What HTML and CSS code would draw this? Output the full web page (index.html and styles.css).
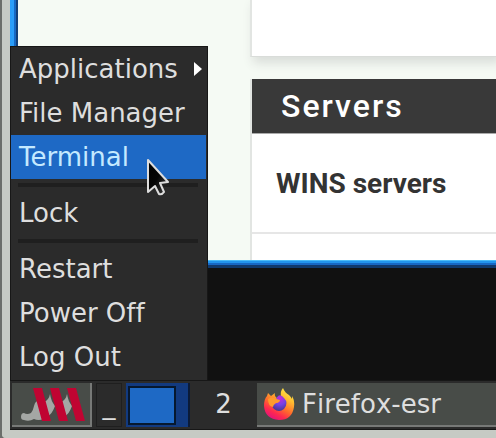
FILE: index.html
```
<!DOCTYPE html>
<html lang="en">
<head>
<meta charset="utf-8">
<title>Desktop</title>
<link rel="stylesheet" href="styles.css">
</head>
<body>
<div class="frame">
  <main class="desktop">
    <section class="window">
      <div class="card card-empty"></div>
      <div class="card card-servers">
        <h2 class="card-title">Servers</h2>
        <div class="card-row">WINS servers</div>
        <div class="card-rest"></div>
      </div>
    </section>
    <nav class="menu">
      <button class="item" type="button">Applications
        <svg class="arrow" viewBox="0 0 8 16" width="8" height="16"><path d="M0 1 L8 8 L0 15Z" fill="#fff"/></svg>
      </button>
      <button class="item" type="button">File Manager</button>
      <button class="item selected" type="button">Terminal</button>
      <hr class="separator">
      <button class="item" type="button">Lock</button>
      <hr class="separator">
      <button class="item" type="button">Restart</button>
      <button class="item" type="button">Power Off</button>
      <button class="item" type="button">Log Out</button>
      <svg class="pointer" viewBox="0 0 26 40" width="26" height="40">
        <defs><linearGradient id="ink" x1="0" y1="0" x2="1" y2="1"><stop offset="0" stop-color="#000"/><stop offset=".5" stop-color="#050505"/><stop offset="1" stop-color="#444"/></linearGradient></defs>
        <path d="M2 3 L2 35 L9 29 L13 37 Q16 38 18 35 L14 26 L22 25Z" fill="url(#ink)" stroke="#ddd" stroke-width="2" stroke-linejoin="round"/>
      </svg>
    </nav>
  </main>
  <footer class="taskbar">
    <button class="start" type="button" aria-label="Menu">
      <svg viewBox="0 0 66 36" width="66" height="36">
        <path d="M1 31 Q1 27 4 27 Q7 29 11 27 Q13 25 14 20 Q15 16 18 14 L24 33 Q18 35 14 33 Q9 36 4 34 Q1 34 1 31Z" fill="#a4a7a4"/>
        <path d="M30 8 Q31 15 35 20 Q32 28 28 30 L24 16 Q29 14 30 8Z M47 8 Q48 15 52 20 Q49 28 45 30 L41 16 Q46 14 47 8Z" fill="#a4a7a4"/>
        <path d="M13 2 H22 L31 35 H22Z M30 2 H39 L48 35 H39Z M47 2 H56 L65 35 H56Z" fill="#c00432"/>
      </svg>
    </button>
    <button class="minimize" type="button">_</button>
    <button class="pager" type="button" aria-label="Workspace"><span class="pager-window"></span></button>
    <span class="workspace">2</span>
    <button class="task" type="button">
      <svg viewBox="0 0 32 34" width="32" height="34">
        <defs>
          <linearGradient id="fire" x1=".85" y1="0" x2=".3" y2="1"><stop offset="0" stop-color="#fff44f"/><stop offset=".3" stop-color="#ffbd30"/><stop offset=".6" stop-color="#ff6a2c"/><stop offset=".8" stop-color="#ff294f"/><stop offset="1" stop-color="#e2127c"/></linearGradient>
          <radialGradient id="globe" cx=".55" cy=".2" r=".8"><stop offset="0" stop-color="#c42bd8"/><stop offset=".5" stop-color="#7542e5"/><stop offset="1" stop-color="#46378e"/></radialGradient>
        </defs>
        <path d="M20 1 Q22 6 26 8 Q28 10 29 12 L29 9 Q32 14 31 20 Q29 33 16 33 Q2 32 1 19 Q1 12 4 9 L5 6 L8 9 L12 6 Q11 9 14 11 Q16 10 18 10 Q17 4 20 1Z" fill="url(#fire)"/>
        <path d="M15 9 Q18 7 21 11 Q26 16 21 22 Q16 26 11 22 Q8 19 10 16 Q14 17 17 14 L13 12Z" fill="url(#globe)"/>
        <path d="M5 12 Q9 9 13 12 L17 13 Q16 16 13 16 Q10 18 10 20 Q5 19 5 12Z" fill="#ff9a2c"/>
      </svg>
      <span>Firefox-esr</span>
    </button>
  </footer>
</div>
</body>
</html>
```
FILE: styles.css
```
* { box-sizing: border-box; }
body {
  margin: 0;
  background: #6b6e6a;
  font-family: "DejaVu Sans", sans-serif;
  font-size: 26px;
}
button {
  margin: 0;
  padding: 0;
  border: 0;
  font: inherit;
  font-variant-ligatures: none;
  color: #dedede;
  background: none;
}
.frame {
  display: flex;
  flex-direction: column;
  height: 100vh;
  border: solid #c6cac4;
  border-width: 0 0 8px 8px;
  border-bottom-left-radius: 4px;
  margin-left: 2px;
}
.desktop {
  position: relative;
  flex: 1;
  display: flex;
  flex-direction: column;
  background: #111;
}
.window {
  height: 268px;
  display: flex;
  flex-direction: column;
  padding-left: 232px;
  background: #f5faf4;
  border-left: 8px solid;
  border-image: linear-gradient(to right, #2a9df8 0 4px, #1668c4 4px 6px, #123f78 6px 8px) 0 0 0 8;
  overflow: hidden;
}
.window::after {
  content: "";
  flex: none;
  height: 8px;
  margin-left: -240px;
  background: linear-gradient(#4bbcf8 0 1px, #2295ee 1px 3px, #1768c5 3px 5px, #10396c 5px 8px);
}
.card { border-left: 2px solid #e2e5e2; background: #fff; }
.card-empty {
  height: 57px;
  border-bottom: 1px solid #d9dcd9;
  box-shadow: 4px 5px 10px 1px #d9ddd9;
}
.card-servers {
  display: flex;
  flex-direction: column;
  flex: 1;
  margin-top: 22px;
  color: #333;
  font-family: Roboto, sans-serif;
}
.card-title {
  margin: 0;
  padding: 0 29px;
  font-size: 32px;
  font-weight: 500;
  line-height: 54px;
  letter-spacing: 2px;
  color: #fff;
  background: #393939;
  border-bottom: 1px solid #aaa;
}
.card-row {
  padding: 0 24px;
  font-size: 28px;
  font-weight: 700;
  line-height: 100px;
  height: 100px;
  border-bottom: 2px solid #e6e6e6;
}
.card-rest { flex: 1; }
.menu {
  position: absolute;
  left: 0;
  bottom: 0;
  width: 198px;
  padding: 0 1px 1px 0;
  display: flex;
  flex-direction: column;
  background: #2b2b2b;
  border: 1px solid #171717;
  border-bottom: 0;
}
.item {
  display: flex;
  align-items: center;
  justify-content: space-between;
  height: 44px;
  padding: 0 4px 0 8px;
  text-align: left;
}
.selected { color: #c4e9ff; background: #1e69c5; }
.separator {
  width: 180px;
  height: 4px;
  margin: 4px 7px;
  border: solid;
  border-width: 2px 0;
  border-color: #1f1f1f #393939;
}
.pointer { position: absolute; left: 135px; top: 110px; }
.taskbar {
  display: flex;
  align-items: stretch;
  height: 50px;
  padding: 2px 0 2px 2px;
  background: #2b2b2b;
  border-top: 1px solid #171717;
  border-bottom: 1px solid #171717;
}
.start {
  width: 80px;
  display: flex;
  align-items: center;
  justify-content: flex-end;
  padding-right: 4px;
  background: #484c48;
  border: solid #777977;
  border-width: 0 2px 2px 0;
}
.minimize { width: 26px; margin: 0 4px; border: 1px solid #1f1f1f; }
.pager {
  width: 64px;
  padding: 2px;
  background: #123a80;
  border-right: 2px solid #0b1b38;
}
.pager-window {
  display: block;
  width: 48px;
  height: 39px;
  background: #1e69c5;
  border: 2px solid #06182f;
}
.workspace {
  width: 67px;
  line-height: 42px;
  text-align: center;
  color: #dedede;
}
.task {
  flex: 1;
  display: flex;
  align-items: center;
  gap: 7px;
  padding-left: 6px;
  font-kerning: none;
  background: #484c48;
  border-bottom: 2px solid #777977;
}
```
